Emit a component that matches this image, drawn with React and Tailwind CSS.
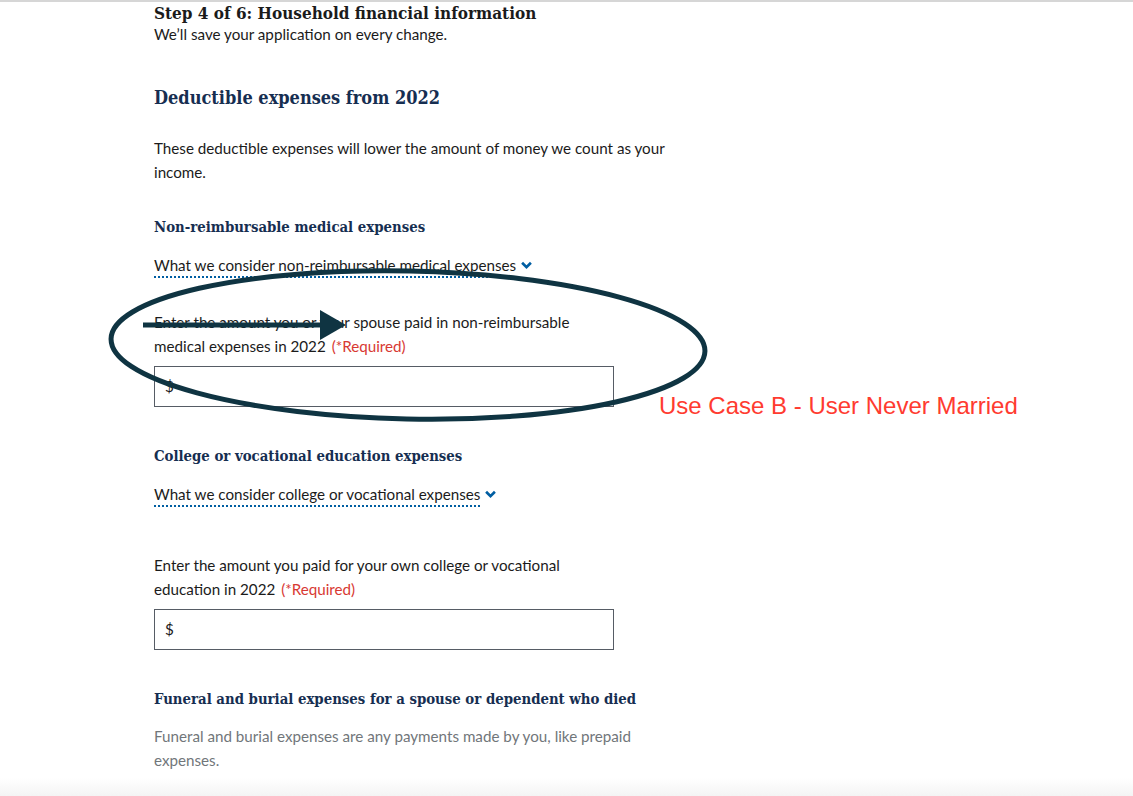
import React from 'react';

const heading = { fontFamily: '"DejaVu Serif Condensed", "DejaVu Serif", serif' };

const Chevron = () => (
    <svg viewBox="0 0 10 8" className="w-[11px] h-[9px] inline-block ml-[5px] -mt-[2px]" aria-hidden="true">
        <path d="M1 1.5 L5 5.5 L9 1.5" fill="none" stroke="#005ea2" strokeWidth="2.4" />
    </svg>
);

const Disclosure = ({ children }) => (
    <div className="flex items-center text-[#1b1b1b]">
        <span className="border-b-2 border-dotted border-[#005ea2] leading-[22px]">{children}</span>
        <Chevron />
    </div>
);

const MoneyInput = () => (
    <div className="w-[460px] h-[41px] border border-[#565c65] flex items-center px-[10px] text-[#1b1b1b]">$</div>
);

const App = () => {
    return (
        <div
            className="relative min-h-[796px] bg-white border-t-2 border-[#d6d6d6] overflow-hidden text-[15.2px] text-[#1b1b1b]"
            style={{ fontFamily: 'Lato, "Noto Sans", sans-serif' }}
        >
            <div className="pl-[154px] w-[700px]">
                <h2 className="text-[17px] font-bold leading-[20px] pt-[1px] text-[#1b1b1b]" style={heading}>
                    Step 4 of 6: Household financial information
                </h2>
                <p className="leading-[22px]">We’ll save your application on every change.</p>

                <h1 className="mt-[40px] text-[18px] font-bold leading-[26px] text-[#162e51]" style={heading}>
                    Deductible expenses from 2022
                </h1>
                <p className="mt-[25px] leading-[24px] w-[530px]">
                    These deductible expenses will lower the amount of money we count as your income.
                </p>

                <h3 className="mt-[31px] text-[14.8px] font-bold leading-[24px] text-[#162e51]" style={heading}>
                    Non-reimbursable medical expenses
                </h3>
                <div className="mt-[15px]">
                    <Disclosure>What we consider non-reimbursable medical expenses</Disclosure>
                </div>
                <p className="mt-[32px] leading-[24px] w-[440px]">
                    Enter the amount you or your spouse paid in non-reimbursable medical expenses in 2022{' '}
                    <span className="text-[#d83933] ml-[2px]">(*Required)</span>
                </p>
                <div className="mt-[8px]">
                    <MoneyInput />
                </div>

                <h3 className="mt-[37px] text-[14.8px] font-bold leading-[24px] text-[#162e51]" style={heading}>
                    College or vocational education expenses
                </h3>
                <div className="mt-[15px]">
                    <Disclosure>What we consider college or vocational expenses</Disclosure>
                </div>
                <p className="mt-[46px] leading-[24px] w-[440px]">
                    Enter the amount you paid for your own college or vocational education in 2022{' '}
                    <span className="text-[#d83933] ml-[2px]">(*Required)</span>
                </p>
                <div className="mt-[8px]">
                    <MoneyInput />
                </div>

                <h3 className="mt-[37px] text-[14.8px] font-bold leading-[24px] text-[#162e51] whitespace-nowrap" style={heading}>
                    Funeral and burial expenses for a spouse or dependent who died
                </h3>
                <p className="mt-[13px] leading-[24px] w-[500px] text-[#71767a]">
                    Funeral and burial expenses are any payments made by you, like prepaid expenses.
                </p>
            </div>

            <div className="absolute left-0 right-0 bottom-0 h-[18px] bg-gradient-to-b from-white to-[#f4f4f4]" />

            {/* annotation overlay */}
            <svg className="absolute left-0 top-0 pointer-events-none" width="1133" height="796" aria-hidden="true">
                <ellipse
                    cx="408"
                    cy="343"
                    rx="297"
                    ry="74"
                    transform="rotate(1.2 408 343)"
                    fill="none"
                    stroke="#0f3442"
                    strokeWidth="5"
                />
                <line x1="143" y1="323" x2="322" y2="323" stroke="#0f3442" strokeWidth="5" />
                <polygon points="320,308 346,323 320,338" fill="#0f3442" />
            </svg>
            <div
                className="absolute left-[659px] top-[389px] text-[24px] leading-[30px] text-[#ff3b30]"
                style={{ fontFamily: '"Liberation Sans", Arial, sans-serif' }}
            >
                Use Case B - User Never Married
            </div>
        </div>
    );
};

export default App;
